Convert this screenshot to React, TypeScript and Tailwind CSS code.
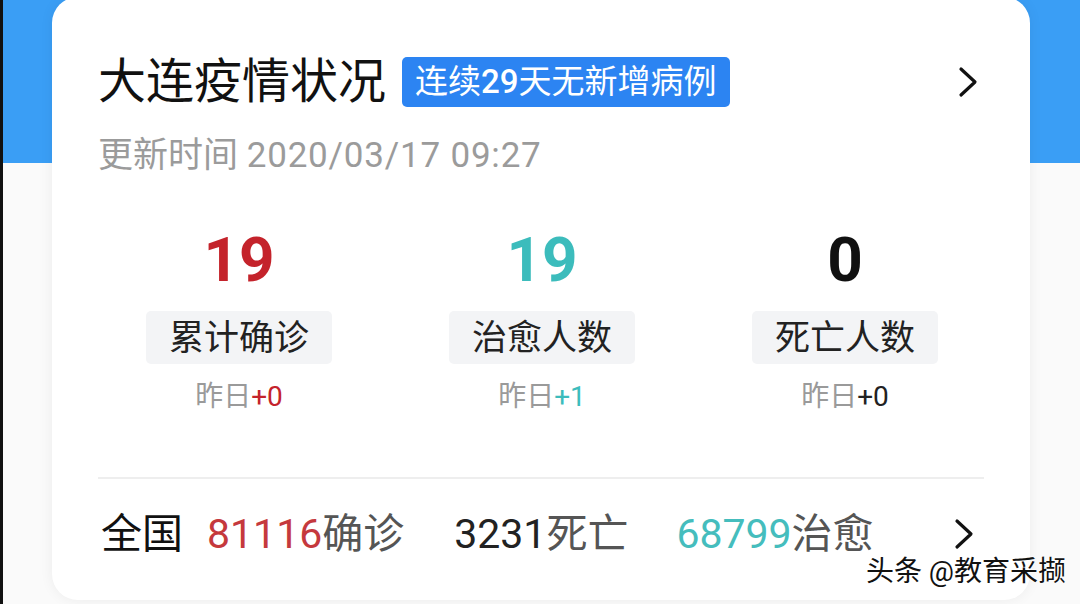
import React from "react";

const Chevron = ({ className }: { className?: string }) => (
  <svg className={className} viewBox="0 0 20 32" fill="none" stroke="#111" strokeWidth="3.2" strokeLinecap="round" strokeLinejoin="round">
    <path d="M3 3 L17 16 L3 29" />
  </svg>
);

const Stat = ({ num, numColor, label, delta, deltaColor }: { num: string; numColor: string; label: string; delta: string; deltaColor: string }) => (
  <div className="flex w-[186px] flex-col items-center">
    <div className={`h-[62px] text-[62px] font-bold leading-[62px] ${numColor}`}>{num}</div>
    <div className="mt-[20px] flex h-[53px] w-[186px] items-center justify-center rounded-[5px] bg-[#f3f4f6] pt-[3px] text-[35px] text-[#222]">{label}</div>
    <div className="mt-[15px] flex h-[36px] items-center text-[28px] leading-[36px] text-[#9a9a9a]">
      昨日<span className={deltaColor}>{delta}</span>
    </div>
  </div>
);

export default function App() {
  return (
    <div className="relative h-[604px] w-[1080px] overflow-hidden border-l-[3px] border-[#111] bg-[linear-gradient(to_bottom,#3a9ef5_163px,#fafafa_163px)] font-[Roboto,'Noto_Sans_CJK_SC',sans-serif]">
      <div className="ml-[49px] mt-[-3px] h-[603px] w-[978px] rounded-[26px] bg-white px-[46px] pt-[60px] shadow-[0_0_14px_rgba(0,0,0,0.06)]">
        <div className="flex h-[50px] items-center">
          <div className="text-[48px] leading-[50px] text-[#111]">大连疫情状况</div>
          <div className="ml-[16px] flex h-[50px] items-center rounded-[5px] bg-[#2c84f2] px-[13px] text-[33px] leading-[50px] text-white">
            连续<span className="font-medium">29</span>天无新增病例
          </div>
          <div className="flex-1" />
          <Chevron className="mr-[6px] h-[32px] w-[20px]" />
        </div>
        <div className="mt-[29px] text-[35px] leading-[40px] text-[#9b9b9b]">
          更新时间 <span className="tracking-[0.8px]">2020/03/17 09:27</span>
        </div>
        <div className="ml-[48px] mt-[53px] flex gap-[117px]">
          <Stat num="19" numColor="text-[#c4232b]" label="累计确诊" delta="+0" deltaColor="text-[#c4232b]" />
          <Stat num="19" numColor="text-[#3cbcbc]" label="治愈人数" delta="+1" deltaColor="text-[#3cbcbc]" />
          <Stat num="0" numColor="text-[#111]" label="死亡人数" delta="+0" deltaColor="text-[#222]" />
        </div>
        <div className="mt-[62px] h-[2px] bg-[#eeeeee]" />
        <div className="mt-[30px] flex h-[50px] items-center pl-[3px] text-[41px] leading-[50px]">
          <span className="text-[#111]">全国</span>
          <span className="ml-[24px] text-[#c5393d]">81116</span>
          <span className="text-[#555]">确诊</span>
          <span className="ml-[50px] text-[#222]">3231</span>
          <span className="text-[#555]">死亡</span>
          <span className="ml-[48px] text-[#45bdbd]">68799</span>
          <span className="text-[#555]">治愈</span>
          <div className="flex-1" />
          <Chevron className="mr-[10px] h-[32px] w-[20px]" />
        </div>
      </div>
      <div className="absolute bottom-[16px] right-[14px] text-[28px] leading-[32px] text-[#111] [text-shadow:0_0_2px_#fff,0_0_2px_#fff,0_0_2px_#fff]">
        头条 @教育采撷
      </div>
    </div>
  );
}
